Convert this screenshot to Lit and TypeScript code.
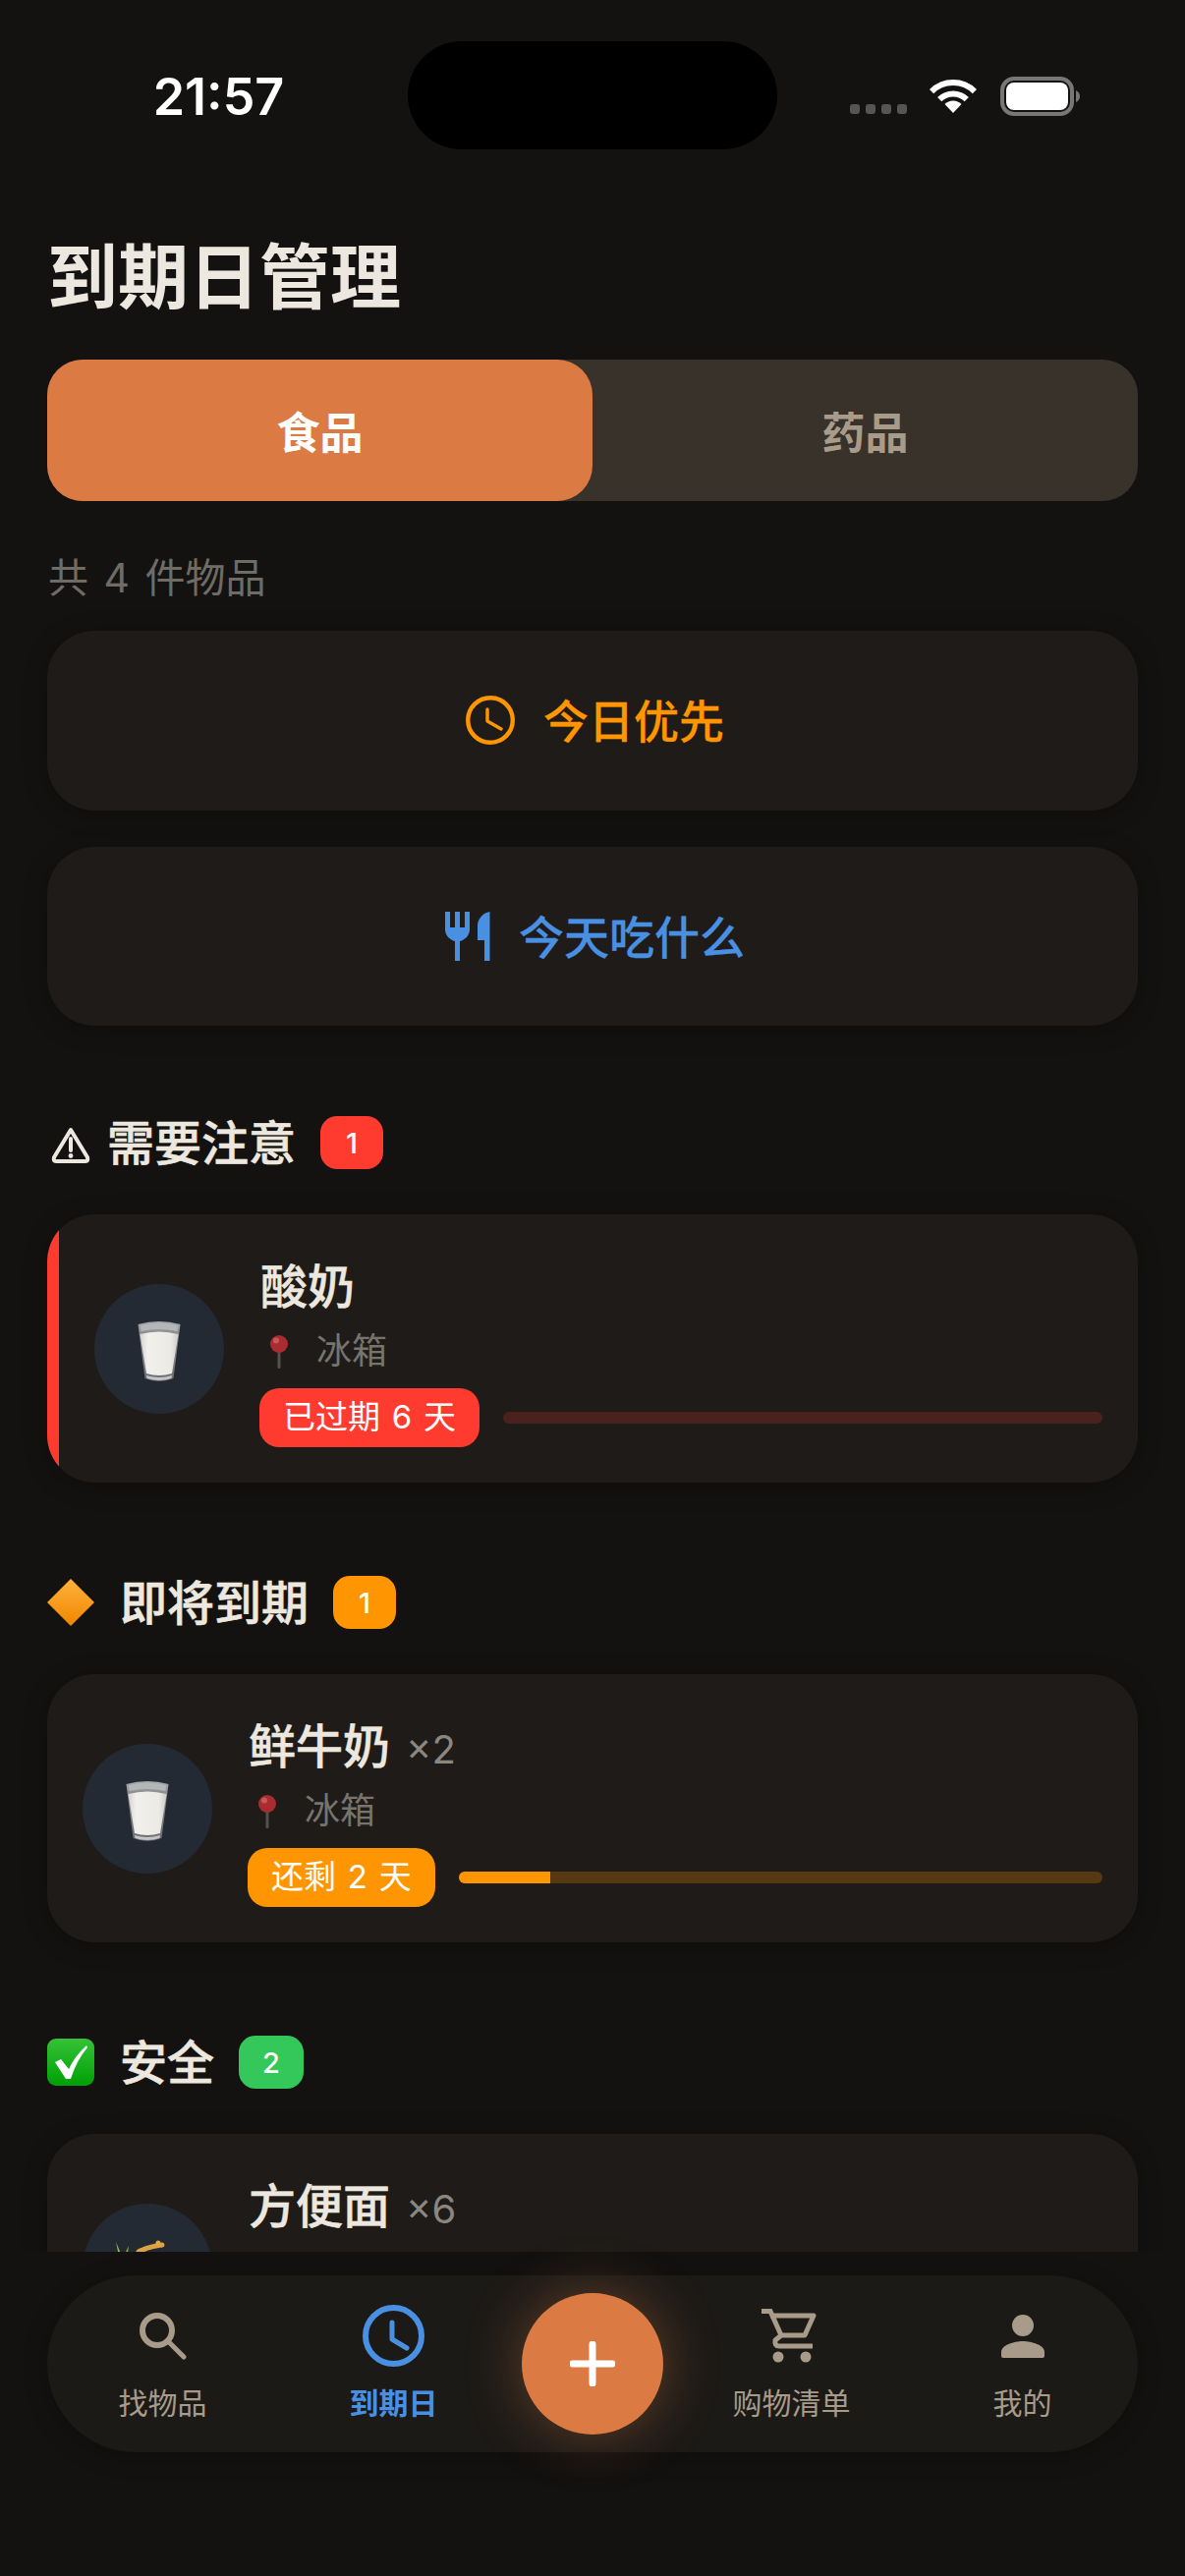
import { LitElement, css, html } from 'lit';
import { customElement } from 'lit/decorators.js';

type Item = {
	name: string;
	count?: string;
	emoji: 'milk' | 'rice';
	place?: string;
	tag?: string;
	percent?: number;
};

type Section = {
	title: string;
	icon: 'warn' | 'diamond' | 'check';
	badge: string;
	tone: 'red' | 'orange' | 'green';
	item: Item;
};

const sections: Section[] = [
	{
		title: '需要注意', icon: 'warn', badge: '1', tone: 'red',
		item: { name: '酸奶', emoji: 'milk', place: '冰箱', tag: '已过期 6 天', percent: 0 },
	},
	{
		title: '即将到期', icon: 'diamond', badge: '1', tone: 'orange',
		item: { name: '鲜牛奶', count: '×2', emoji: 'milk', place: '冰箱', tag: '还剩 2 天', percent: 14.3 },
	},
	{
		title: '安全', icon: 'check', badge: '2', tone: 'green',
		item: { name: '方便面', count: '×6', emoji: 'rice' },
	},
];

const milk = html`<svg class="emoji-milk" viewBox="0 0 44 64">
	<defs>
		<linearGradient id="milkFill" x1="0" x2="1" y1="0" y2="0">
			<stop offset="0" stop-color="#d5d3ce" />
			<stop offset="0.2" stop-color="#f1f0ec" />
			<stop offset="0.8" stop-color="#eceae4" />
			<stop offset="1" stop-color="#cfcdc6" />
		</linearGradient>
		<linearGradient id="glassFill" x1="0" x2="0" y1="0" y2="1">
			<stop offset="0" stop-color="#a9abad" />
			<stop offset="0.2" stop-color="#8b8d90" />
			<stop offset="1" stop-color="#6b6d70" />
		</linearGradient>
	</defs>
	<path d="M0.500 5Q22 -1 43.500 5L36.500 60Q22 66 7.500 60Z" fill="url(#glassFill)" />
	<path d="M3 6Q22 1 41 6L40.500 12Q22 8 3.500 12Z" fill="#b4b6b8" />
	<path d="M2.500 15Q22 10 41.500 15L35 55Q22 59 9 55Z" fill="url(#milkFill)" />
	<path d="M9 57Q22 61 35 57L34.500 60Q22 64 9.500 60Z" fill="#c4c5c6" />
</svg>`;

const rice = html`<svg class="emoji-rice" viewBox="0 0 64 64">
	<path d="M0 5L5 17H2.500Z" fill="#8fc04a" />
	<path d="M13 9L12 17H9Z" fill="#7fae3c" />
	<path d="M23 15Q32 10 47 8" stroke="#dba343" stroke-width="5" stroke-linecap="round" stroke-dasharray="4 2" fill="none" />
	<circle cx="43" cy="6" r="2.500" fill="#e0aa4a" />
</svg>`;

const pin = html`<svg class="pin" viewBox="0 0 18 34">
	<rect x="7.500" y="14" width="3" height="20" rx="1.500" fill="#55514d" />
	<circle cx="9" cy="9" r="9" fill="#a92c30" />
	<circle cx="6" cy="5.500" r="3" fill="#c9575a" />
</svg>`;

const sectionIcons = {
	warn: html`<svg class="head-icon" viewBox="0 0 48 48">
		<path d="M24 11L41 39Q42 43 39 43H9Q6 43 7 39Z" fill="none" stroke="#ede8df" stroke-width="4" stroke-linejoin="round" />
		<path d="M24 20V32" stroke="#ede8df" stroke-width="4" stroke-linecap="round" />
		<circle cx="24" cy="37.500" r="2.400" fill="#ede8df" />
	</svg>`,
	diamond: html`<svg class="head-icon" viewBox="0 0 48 48">
		<defs>
			<linearGradient id="diamondFill" x1="0" x2="0" y1="0" y2="1">
				<stop offset="0" stop-color="#ffb23e" />
				<stop offset="1" stop-color="#f18600" />
			</linearGradient>
		</defs>
		<path d="M24 0L48 24L24 48L0 24Z" fill="url(#diamondFill)" />
	</svg>`,
	check: html`<svg class="head-icon" viewBox="0 0 48 48">
		<defs>
			<linearGradient id="checkFill" x1="0" x2="0" y1="0" y2="1">
				<stop offset="0" stop-color="#35c238" />
				<stop offset="1" stop-color="#00a005" />
			</linearGradient>
		</defs>
		<rect width="48" height="48" rx="9" fill="url(#checkFill)" />
		<path d="M8 24L14 21L22 31Q28 18 40 7L41 9Q30 22 24 41H19Z" fill="#fff" />
	</svg>`,
};

@customElement('app-root')
export class AppRoot extends LitElement {
	static styles = css`:host {
		display: block;
		width: 1206px;
		height: 2622px;
		overflow: hidden;
		background-color: #131211;
		color: #ede8df;
		font-family: "Inter", "Noto Sans CJK SC", sans-serif;
	}

	svg {
		display: block;
		flex: none;
	}

	.status {
		display: flex;
		height: 152px;
		padding-top: 42px;
		box-sizing: border-box;
	}

	.time {
		width: 385px;
		padding: 32px 0 0 30px;
		font-size: 52px;
		line-height: 50px;
		font-weight: 600;
		color: #fff;
		text-align: center;
	}

	.island {
		width: 376px;
		height: 110px;
		border-radius: 55px;
		background-color: #000;
	}

	.status-right {
		display: flex;
		align-items: flex-start;
		padding: 36px 0 0 74px;
	}

	.dots {
		display: flex;
		gap: 6px;
		margin: 28px 22px 0 0;
	}

	.dots span {
		width: 10px;
		height: 10px;
		border-radius: 3px;
		background-color: #555;
	}

	.wifi {
		width: 50px;
		height: 38px;
		margin-right: 23px;
	}

	.battery {
		width: 82px;
		height: 40px;
	}

	.scroll {
		height: 2140px;
		overflow: hidden;
		padding: 0 48px;
	}

	h1 {
		margin: 80px 0 34px 0;
		height: 100px;
		font-size: 72px;
		line-height: 100px;
		font-weight: 700;
	}

	.segment {
		display: flex;
		height: 144px;
		border-radius: 36px;
		background-color: #39322b;
	}

	.segment div {
		flex: 1;
		display: flex;
		align-items: center;
		justify-content: center;
		font-size: 44px;
		font-weight: 700;
		color: #a89b8a;
		border-radius: 36px;
	}

	.segment .on {
		background-color: #db7b43;
		color: #fff;
	}

	.total {
		height: 60px;
		margin: 48px 0 24px 0;
		font-size: 41px;
		line-height: 60px;
		color: #6f6b65;
		padding-left: 1px;
		word-spacing: 4px;
	}

	.actions {
		display: flex;
		flex-direction: column;
		gap: 37px;
	}

	.action {
		display: flex;
		align-items: center;
		justify-content: center;
		gap: 29px;
		height: 182.500px;
		border-radius: 48px;
		background-color: #1e1b18;
		font-size: 46px;
		font-weight: 500;
		-webkit-text-stroke: 0.3px currentColor;
		padding-left: 5px;
		box-shadow: 0 4px 24px rgba(0, 0, 0, 0.25);
	}

	.action span {
		margin-top: -4px;
	}

	.amber {
		color: #ff9500;
	}

	.blue {
		color: #4a90e2;
	}

	.clock {
		width: 50px;
		height: 50px;
	}

	.cutlery {
		width: 46px;
		height: 50px;
	}

	section {
		margin-top: 95px;
	}

	section:first-of-type {
		margin-top: 92px;
	}

	.head {
		display: flex;
		align-items: center;
		height: 54px;
		margin-bottom: 46px;
	}

	.head-icon {
		width: 48px;
		height: 48px;
	}

	.head h2 {
		margin: 2px 25px 0 26px;
		font-size: 48px;
		line-height: 54px;
		font-weight: 500;
		-webkit-text-stroke: 0.6px currentColor;
	}

	.head.warn h2 {
		margin-left: 13px;
	}

	.badge {
		display: flex;
		align-items: center;
		justify-content: center;
		box-sizing: border-box;
		min-width: 64px;
		height: 54px;
		padding: 0 24px;
		border-radius: 17px;
		font-size: 29px;
		font-weight: 500;
		color: #fff;
	}

	.badge.red, .tag.red, .edge {
		background-color: #ff3b30;
	}

	.badge.orange, .tag.orange {
		background-color: #ff9500;
	}

	.badge.green {
		background-color: #34c759;
	}

	.card {
		display: flex;
		height: 273px;
		overflow: hidden;
		border-radius: 48px;
		background-color: #1e1b18;
		box-shadow: 0 4px 24px rgba(0, 0, 0, 0.25);
	}

	.edge {
		flex: 0 0 12px;
	}

	.card-body {
		flex: 1;
		min-width: 0;
		display: flex;
		align-items: center;
		gap: 36px;
		padding: 0 36px;
	}

	.avatar {
		flex: none;
		display: flex;
		align-items: center;
		justify-content: center;
		width: 132px;
		height: 132px;
		border-radius: 50%;
		background-color: #232a33;
	}

	.emoji-milk {
		width: 44px;
		height: 64px;
		margin-top: 5px;
	}

	.emoji-rice {
		width: 64px;
		height: 64px;
	}

	.info {
		flex: 1;
		min-width: 0;
		align-self: flex-start;
		padding-top: 37px;
	}

	.name {
		display: flex;
		align-items: baseline;
		gap: 16px;
		height: 73px;
		font-size: 48px;
		line-height: 74px;
		font-weight: 500;
		-webkit-text-stroke: 0.5px currentColor;
		padding-left: 1px;
	}

	.count {
		font-size: 40px;
		font-weight: 400;
		color: #8a8680;
		-webkit-text-stroke: 0;
	}

	.place {
		display: flex;
		align-items: center;
		gap: 29px;
		height: 60px;
		margin-bottom: 7px;
		padding-left: 11px;
		font-size: 36px;
		line-height: 54px;
		color: #77736d;
	}

	.place span {
		margin-top: -2px;
	}

	.pin {
		width: 18px;
		height: 34px;
		margin-top: -1px;
	}

	.status-line {
		display: flex;
		align-items: center;
		gap: 24px;
	}

	.tag {
		flex: none;
		height: 60px;
		padding: 0 24px;
		border-radius: 20px;
		font-size: 33px;
		line-height: 58px;
		color: #fff;
		word-spacing: 2.500px;
	}

	.track {
		flex: 1;
		height: 12px;
		overflow: hidden;
		border-radius: 6px;
	}

	.track.red {
		background-color: rgba(255, 59, 48, 0.2);
	}

	.track.orange {
		background-color: rgba(255, 149, 0, 0.25);
	}

	.fill {
		height: 100%;
		background-color: #ff9500;
	}

	nav {
		display: grid;
		grid-template-columns: 1fr 1fr 170px 1fr 1fr;
		align-items: center;
		height: 180px;
		margin: 24px 48px 0 48px;
		border-radius: 90px;
		background-color: #1c1a17;
		box-shadow: 0 4px 24px rgba(0, 0, 0, 0.25);
	}

	.tab {
		display: flex;
		flex-direction: column;
		align-items: center;
		font-size: 30px;
		line-height: 40px;
		color: #a89b8a;
	}

	.tab.on {
		color: #4a90e2;
		font-weight: 700;
	}

	.tab-icon {
		display: flex;
		align-items: center;
		justify-content: center;
		height: 63px;
		margin-bottom: 17px;
	}

	.cart {
		margin-left: -5px;
	}

	.fab {
		justify-self: center;
		display: flex;
		align-items: center;
		justify-content: center;
		width: 144px;
		height: 144px;
		border-radius: 50%;
		background-color: #db7b43;
		box-shadow: 0 0 56px rgba(219, 123, 67, 0.38);
	}
	`;

	renderCard(item: Item, tone: string) {
		return html`<div class="card">
			${tone === 'red' ? html`<div class="edge"></div>` : ''}
			<div class="card-body">
				<div class="avatar">${item.emoji === 'milk' ? milk : rice}</div>
				<div class="info">
					<div class="name">${item.name}${item.count ? html`<span class="count">${item.count}</span>` : ''}</div>
					${item.place ? html`<div class="place">${pin}<span>${item.place}</span></div>` : ''}
					${item.tag ? html`<div class="status-line">
						<div class="tag ${tone}">${item.tag}</div>
						<div class="track ${tone}"><div class="fill" style="width: ${item.percent}%"></div></div>
					</div>` : ''}
				</div>
			</div>
		</div>`;
	}

	render() {
		return html`
			<div class="status">
				<div class="time">21:57</div>
				<div class="island"></div>
				<div class="status-right">
					<div class="dots"><span></span><span></span><span></span><span></span></div>
					<svg class="wifi" viewBox="0 0 50 38">
						<path d="M3.100 15.100A31 31 0 0 1 46.900 15.100" fill="none" stroke="#fff" stroke-width="6" />
						<path d="M11.200 23.200A19.500 19.500 0 0 1 38.800 23.200" fill="none" stroke="#fff" stroke-width="6" />
						<path d="M25 37L16.500 28A12 12 0 0 1 33.500 28Z" fill="#fff" />
					</svg>
					<svg class="battery" viewBox="0 0 82 40">
						<rect x="2" y="2" width="71" height="36" rx="12" fill="none" stroke="#777" stroke-width="4" />
						<rect x="6" y="6" width="63" height="28" rx="8" fill="#fff" />
						<path d="M77 14Q81 16 81 20Q81 24 77 26Z" fill="#777" />
					</svg>
				</div>
			</div>
			<div class="scroll">
				<h1>到期日管理</h1>
				<div class="segment"><div class="on">食品</div><div>药品</div></div>
				<div class="total">共 4 件物品</div>
				<div class="actions">
					<div class="action amber">
						<svg class="clock" viewBox="0 0 50 50">
							<circle cx="25" cy="25" r="22.800" fill="none" stroke="currentColor" stroke-width="4.400" />
							<path d="M22 14V26L36 34" fill="none" stroke="currentColor" stroke-width="3.400" stroke-linecap="round" stroke-linejoin="round" />
						</svg>
						<span>今日优先</span>
					</div>
					<div class="action blue">
						<svg class="cutlery" viewBox="0 0 46 50">
							<path d="M0 0H5V16H10V0H15V16H20V0H25V18C25 24 20 29 15 30V50H10V30C5 29 0 24 0 18Z" fill="currentColor" />
							<path d="M45.500 0V50H40V29H33V14C33 8 38 1 45.500 0Z" fill="currentColor" />
						</svg>
						<span>今天吃什么</span>
					</div>
				</div>
				${sections.map(s => html`<section>
					<div class="head ${s.icon}">
						${sectionIcons[s.icon]}
						<h2>${s.title}</h2>
						<div class="badge ${s.tone}">${s.badge}</div>
					</div>
					${this.renderCard(s.item, s.tone)}
				</section>`)}
			</div>
			<nav>
				<div class="tab">
					<div class="tab-icon"><svg width="48" height="48" viewBox="0 0 48 48" fill="none" stroke="#a89b8a">
						<circle cx="18" cy="18" r="15" stroke-width="6" />
						<path d="M29 29L45 45" stroke-width="5" stroke-linecap="round" />
					</svg></div>
					找物品
				</div>
				<div class="tab on">
					<div class="tab-icon"><svg width="63" height="63" viewBox="0 0 63 63" fill="none" stroke="#4a90e2">
						<circle cx="31.500" cy="31.500" r="28.500" stroke-width="6" />
						<path d="M30 18V35L45 44" stroke-width="5" stroke-linecap="round" stroke-linejoin="round" />
					</svg></div>
					到期日
				</div>
				<div class="fab"><svg width="46" height="46" viewBox="0 0 46 46">
					<path d="M23 3V43M3 23H43" stroke="#fff" stroke-width="7" stroke-linecap="round" />
				</svg></div>
				<div class="tab">
					<div class="tab-icon"><svg class="cart" width="56" height="55" viewBox="0 0 56 55" fill="none" stroke="#a89b8a">
						<path d="M9 7H53L44 27H20" stroke-width="5" stroke-linejoin="round" />
						<path d="M0 2.500H9L20 27L14 32Q13 38 18 38H52" stroke-width="5" />
						<circle cx="17" cy="49" r="5.500" fill="#a89b8a" stroke="none" />
						<circle cx="45" cy="49" r="5.500" fill="#a89b8a" stroke="none" />
					</svg></div>
					购物清单
				</div>
				<div class="tab">
					<div class="tab-icon"><svg width="44" height="44" viewBox="0 0 44 44" fill="#a89b8a">
						<circle cx="22" cy="11" r="11" />
						<path d="M0 42V38C0 31 13 27 22 27S44 31 44 38V42Q44 44 42 44H2Q0 44 0 42Z" />
					</svg></div>
					我的
				</div>
			</nav>
		`;
	}
}

declare global {
	interface HTMLElementTagNameMap {
		"app-root": AppRoot,
	}
}
